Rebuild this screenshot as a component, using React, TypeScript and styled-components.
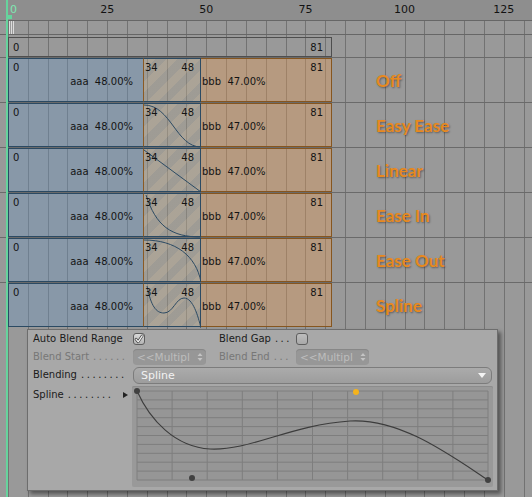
import React from 'react';
import styled, { createGlobalStyle } from 'styled-components';

const FRAME = 3.966;
const ORIGIN = 8;

const GlobalStyle = createGlobalStyle`
  html, body {
    margin: 0;
    padding: 0;
    background: #999999;
  }
  body {
    overflow: hidden;
  }
`

const Screen = styled.div`
  position: relative;
  width: 532px;
  height: 497px;
  overflow: hidden;
  background-color: #999999;
  background-image: repeating-linear-gradient(90deg, #727272 0 1px, transparent 1px 19.83px);
  background-repeat: no-repeat;
  background-position: 8px 0;
  background-size: calc(100% - 8px) 100%;
  font-family: "DejaVu Sans", sans-serif;
  color: #141414;
`

const Ruler = styled.div`
  position: relative;
  height: 20px;
  background: #8e8e8e;
  border-bottom: 1px solid #666666;
`

const RulerNumber = styled.span.attrs<{ $frame: number }>(props => ({
  style: { left: ORIGIN + props.$frame * FRAME }
}))<{ $frame: number }>`
  position: absolute;
  top: 0;
  line-height: 20px;
  font-size: 11px;
  color: #121212;
  transform: translateX(-50%);
`

const TickBand = styled.div`
  height: 13px;
  border-bottom: 1px solid #666666;
`

const Playhead = styled.div`
  position: absolute;
  left: 6px;
  top: 0;
  bottom: 0;
  width: 2px;
  background: #66d39d;
  z-index: 5;
`

const PlayheadLabel = styled.span`
  position: absolute;
  left: 10px;
  top: 0;
  line-height: 20px;
  font-size: 11px;
  color: #7fe6b2;
  z-index: 5;
`

const PlayheadKnob = styled.div`
  position: absolute;
  left: 7px;
  top: 15px;
  width: 5px;
  height: 4px;
  background: #66d39d;
  z-index: 5;
`

const PlayheadHatch = styled.div`
  position: absolute;
  left: 9px;
  top: 21px;
  width: 5px;
  height: 13px;
  background: repeating-linear-gradient(90deg, #dcdcdc 0 1px, transparent 1px 2px);
  z-index: 5;
`

const Body = styled.div`
  padding-top: 2px;
`

const RangeRow = styled.div`
  height: 20px;
  width: 324px;
  margin-left: 8px;
  box-sizing: border-box;
  border: 1px solid #4e4e4e;
  display: flex;
  justify-content: space-between;
  align-items: center;
  padding: 0 8px 0 4px;
  font-size: 10px;
`

const TrackRow = styled.div`
  height: 45px;
  box-sizing: border-box;
  border-top: 1px solid #6a6a6a;
  display: flex;
  padding-left: 8px;
  &:last-of-type {
    height: 46px;
    border-bottom: 1px solid #6a6a6a;
  }
`

const ClipText = styled.div<{ $align?: string }>`
  display: flex;
  justify-content: ${props => props.$align || 'flex-start'};
  line-height: 12px;
  font-size: 10px;
  white-space: pre;
`

const MidText = styled(ClipText)`
  margin-top: 2px;
`

const BlueSection = styled.div`
  width: 135px;
  height: 44px;
  box-sizing: border-box;
  background: rgba(110, 150, 190, 0.4);
  border: 1px solid #2b4a63;
  border-right: none;
  padding: 3px 10px 0 4px;
  display: flex;
  flex-direction: column;
`

const Overlap = styled.div`
  position: relative;
  width: 58px;
  height: 44px;
  box-sizing: border-box;
  background: repeating-linear-gradient(135deg, rgba(196, 178, 148, 0.42) 0 8px, rgba(168, 160, 142, 0.38) 8px 16px);
  border-top: 1px solid #2b4a63;
  border-bottom: 1px solid #2b4a63;
  border-right: 1px solid #2b4a63;
  border-left: 1px solid #8a5a24;
  padding: 3px 6px 0 1px;
`

const OverlapNumbers = styled(ClipText)`
  position: relative;
  justify-content: space-between;
  z-index: 1;
`

const BlendCurve = styled.svg`
  position: absolute;
  left: -1px;
  top: -1px;
`

const OrangeSection = styled.div`
  width: 131px;
  height: 44px;
  box-sizing: border-box;
  background: rgba(225, 155, 90, 0.4);
  border: 1px solid #86561f;
  border-left: none;
  padding: 3px 8px 0 1px;
  display: flex;
  flex-direction: column;
`

const EaseLabel = styled.div`
  align-self: center;
  margin-left: 44px;
  font-family: Lato, "Open Sans", sans-serif;
  font-weight: 700;
  font-size: 17px;
  color: #e8891e;
  text-shadow: 1px 1px 2px rgba(0, 0, 0, 0.4);
`

const Panel = styled.div`
  margin: 2px 0 0 27px;
  width: 471px;
  height: 162px;
  box-sizing: border-box;
  background: #a8a8a8;
  border: 1px solid #6d6d6d;
  box-shadow: 3px 3px 4px rgba(0, 0, 0, 0.45);
  padding: 0 5px 3px 5px;
  font-size: 10px;
`

const FieldRow = styled.div`
  display: grid;
  grid-template-columns: 100px 73px 13px 77px 73px 1fr;
  align-items: center;
  height: 18px;
`

const GraphRow = styled(FieldRow)`
  height: 101px;
  margin-top: 2px;
  align-items: start;
`

const FieldLabel = styled.div<{ $disabled?: boolean; $col?: number }>`
  grid-column: ${props => props.$col || 1};
  display: flex;
  align-items: center;
  white-space: nowrap;
  color: ${props => props.$disabled ? '#777777' : '#1b1b1b'};
  line-height: 12px;
`

const SplineLabel = styled(FieldLabel)`
  padding-top: 3px;
  padding-right: 5px;
`

const Leader = styled.span`
  margin-left: 4px;
  letter-spacing: 2.55px;
`

const Arrow = styled.span`
  margin-left: auto;
  width: 0;
  height: 0;
  border-left: 5px solid #222222;
  border-top: 3.5px solid transparent;
  border-bottom: 3.5px solid transparent;
`

const Cell = styled.div<{ $col: number }>`
  grid-column: ${props => props.$col};
  display: flex;
  align-items: center;
`

const CheckBox = styled.div<{ $checked?: boolean }>`
  width: 12px;
  height: 12px;
  box-sizing: border-box;
  border-radius: 3px;
  border: 1px solid #5e5e5e;
  background: ${props => props.$checked
    ? 'linear-gradient(#dadada, #b4b4b4)'
    : 'linear-gradient(#bdbdbd, #a9a9a9)'};
  display: flex;
  align-items: center;
  justify-content: center;
`

const DisabledSelect = styled.div`
  width: 73px;
  height: 16px;
  box-sizing: border-box;
  border-radius: 4px;
  background: #979797;
  box-shadow: inset 0 1px 1px rgba(0, 0, 0, 0.12);
  color: #bdbdbd;
  font-size: 10.5px;
  padding: 0 3px 0 4px;
  display: flex;
  align-items: center;
`

const SelectText = styled.span`
  flex: 1;
  overflow: hidden;
  white-space: nowrap;
`

const Select = styled.div`
  grid-column: 2 / -1;
  height: 17px;
  box-sizing: border-box;
  border-radius: 6px;
  border: 1px solid #7c7c7c;
  background: linear-gradient(#ababab, #9d9d9d);
  color: #f2f2f2;
  font-size: 11px;
  padding: 0 5px 0 7px;
  display: flex;
  align-items: center;
  justify-content: space-between;
`

const Graph = styled.div`
  grid-column: 2 / -1;
  margin-left: -1px;
  width: 361px;
  height: 101px;
  background: #999999;
  border-radius: 2px;
  box-shadow: inset 0 1px 0 #8c8c8c;
`

type TTrack = {
  label: string,
  curve: string | null
}

const tracks: TTrack[] = [
  { label: 'Off', curve: null },
  { label: 'Easy Ease', curve: 'M1,2 C28,2 33,44 58,44' },
  { label: 'Linear', curve: 'M1,2 L58,44' },
  { label: 'Ease In', curve: 'M3,2 C13,33 28,44 58,44' },
  { label: 'Ease Out', curve: 'M1,2 C33,2 53,18 58,44' },
  { label: 'Spline', curve: 'M4,3 C8,23 13,30 21,30 C30,30 33,15 41,15 C50,15 55,33 58,45' },
]

const Check = () => (
  <svg width="10" height="10" viewBox="0 0 10 10">
    <path d="M2,5.2 L4.2,7.8 L8.2,1.8" fill="none" stroke="#3a3a3a" strokeWidth="2.6" strokeLinecap="round" strokeLinejoin="round" />
    <path d="M2,5.2 L4.2,7.8 L8.2,1.8" fill="none" stroke="#f4f4f4" strokeWidth="1.3" strokeLinecap="round" strokeLinejoin="round" />
  </svg>
)

const UpDown = () => (
  <svg width="6" height="10" viewBox="0 0 6 10">
    <path d="M0.5,4 L3,1 L5.5,4 Z M0.5,6 L3,9 L5.5,6 Z" fill="#c4c4c4" />
  </svg>
)

const DownTriangle = () => (
  <svg width="8" height="5" viewBox="0 0 8 5">
    <path d="M0,0 L8,0 L4,5 Z" fill="#f4f4f4" />
  </svg>
)

const dots = (n: number) => '.'.repeat(n);

const SplineGraph = () => {
  const cols = Array.from({ length: 11 }, (_, i) => 5 + i * 35.1);
  const rows = Array.from({ length: 11 }, (_, i) => 5 + i * 8.9);
  return (
    <svg width="361" height="101" viewBox="0 0 361 101">
      <rect x="5" y="5" width="351" height="89" fill="#969696" />
      {cols.map(x => (
        <line key={'c' + x} x1={x} y1={5} x2={x} y2={94} stroke="#7e7e7e" strokeWidth="1" />
      ))}
      {rows.map(y => (
        <line key={'r' + y} x1={5} y1={y} x2={356} y2={y} stroke="#7e7e7e" strokeWidth="1" />
      ))}
      <path
        d="M5,5 C18,34 43,61 78,63 C118,65 158,39 218,35 C268,32 318,69 356,94"
        fill="none"
        stroke="#3c3c3c"
        strokeWidth="1.1"
      />
      <circle cx="5" cy="5" r="3" fill="#414141" />
      <circle cx="60" cy="92" r="3" fill="#414141" />
      <circle cx="356" cy="94" r="3" fill="#414141" />
      <circle cx="224" cy="6" r="3" fill="#f5b31c" />
    </svg>
  )
}

export default function App() {
  return (
    <Screen>
      <GlobalStyle />
      <Playhead />
      <PlayheadLabel>0</PlayheadLabel>
      <PlayheadKnob />
      <PlayheadHatch />
      <Ruler>
        {[25, 50, 75, 100, 125].map(f => (
          <RulerNumber key={f} $frame={f}>{f}</RulerNumber>
        ))}
      </Ruler>
      <TickBand />
      <Body>
        <RangeRow>
          <span>0</span>
          <span>81</span>
        </RangeRow>
        {tracks.map(track => (
          <TrackRow key={track.label}>
            <BlueSection>
              <ClipText>0</ClipText>
              <MidText $align="flex-end">{'aaa  48.00%'}</MidText>
            </BlueSection>
            <Overlap>
              {track.curve && (
                <BlendCurve width="58" height="46" viewBox="0 0 58 46">
                  <path d={track.curve} fill="none" stroke="#2b4a63" strokeWidth="1" />
                </BlendCurve>
              )}
              <OverlapNumbers>
                <span>34</span>
                <span>48</span>
              </OverlapNumbers>
            </Overlap>
            <OrangeSection>
              <ClipText $align="flex-end">81</ClipText>
              <MidText>{'bbb  47.00%'}</MidText>
            </OrangeSection>
            <EaseLabel>{track.label}</EaseLabel>
          </TrackRow>
        ))}
        <Panel>
          <FieldRow>
            <FieldLabel>Auto Blend Range</FieldLabel>
            <Cell $col={2}>
              <CheckBox $checked><Check /></CheckBox>
            </Cell>
            <FieldLabel $col={4}>Blend Gap<Leader>{dots(3)}</Leader></FieldLabel>
            <Cell $col={5}>
              <CheckBox />
            </Cell>
          </FieldRow>
          <FieldRow>
            <FieldLabel $disabled>Blend Start<Leader>{dots(6)}</Leader></FieldLabel>
            <Cell $col={2}>
              <DisabledSelect>
                <SelectText>{'<<Multipl'}</SelectText>
                <UpDown />
              </DisabledSelect>
            </Cell>
            <FieldLabel $disabled $col={4}>Blend End<Leader>{dots(3)}</Leader></FieldLabel>
            <Cell $col={5}>
              <DisabledSelect>
                <SelectText>{'<<Multipl'}</SelectText>
                <UpDown />
              </DisabledSelect>
            </Cell>
          </FieldRow>
          <FieldRow>
            <FieldLabel>Blending<Leader>{dots(8)}</Leader></FieldLabel>
            <Select>
              <span>Spline</span>
              <DownTriangle />
            </Select>
          </FieldRow>
          <GraphRow>
            <SplineLabel>Spline<Leader>{dots(8)}</Leader><Arrow /></SplineLabel>
            <Graph>
              <SplineGraph />
            </Graph>
          </GraphRow>
        </Panel>
      </Body>
    </Screen>
  )
}
